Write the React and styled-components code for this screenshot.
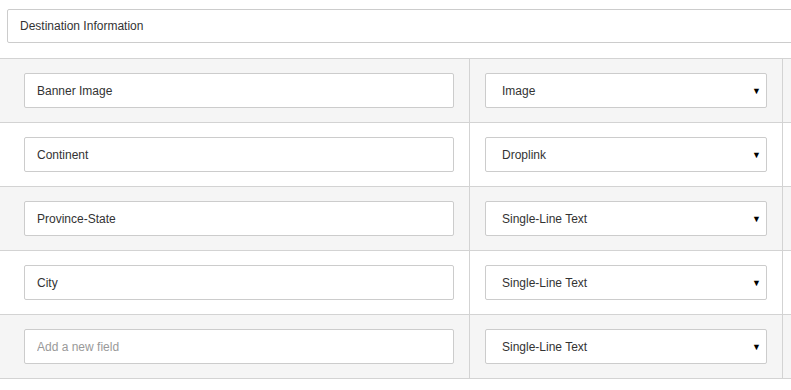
import React from 'react'
import styled, { createGlobalStyle } from 'styled-components'

const GlobalStyle = createGlobalStyle`
  html, body {
    margin: 0;
    padding: 0;
    background: #fff;
  }
  body {
    font-family: "Liberation Sans", Arial, sans-serif;
    font-size: 12px;
    color: #333;
  }
`

const Page = styled.div`
  width: 791px;
  height: 390px;
  overflow: hidden;
  padding-top: 9px;
  box-sizing: border-box;
`
const SectionTitle = styled.div`
  margin: 0 -20px 15px 7px;
  height: 34px;
  border: 1px solid #ccc;
  border-radius: 2px;
  box-sizing: border-box;
  padding-left: 12px;
  display: flex;
  align-items: center;
`
const Table = styled.div`
  display: grid;
  grid-template-columns: 470px 313px 1fr;
  border-top: 1px solid #d3d3d3;
`
const Cell = styled.div`
  background: ${p => (p.$shaded ? '#f5f5f5' : '#fff')};
  border-bottom: 1px solid #d3d3d3;
  border-right: ${p => (p.$last ? 'none' : '1px solid #d3d3d3')};
  padding: 14px 15px 14px ${p => (p.$first ? '24px' : '15px')};
  min-height: 63px;
  box-sizing: border-box;
`
const TextInput = styled.input`
  display: block;
  width: 100%;
  height: 35px;
  box-sizing: border-box;
  border: 1px solid #ccc;
  border-radius: 2px;
  background: #fff;
  padding: 0 12px;
  font-family: inherit;
  font-size: 12px;
  color: #333;
  outline: none;
  &::placeholder {
    color: #999;
  }
`
const SelectWrap = styled.div`
  position: relative;
`
const Select = styled.select`
  display: block;
  width: 100%;
  height: 35px;
  box-sizing: border-box;
  border: 1px solid #ccc;
  border-radius: 2px;
  background: #fff;
  padding: 0 24px 0 16px;
  font-family: inherit;
  font-size: 12px;
  color: #333;
  appearance: none;
  -webkit-appearance: none;
  outline: none;
`
const Arrow = styled.span`
  position: absolute;
  right: 6px;
  top: 50%;
  transform: translateY(-50%);
  font-size: 9px;
  color: #000;
  pointer-events: none;
`

const types = ['Image', 'Droplink', 'Single-Line Text']

const fields = [
  { name: 'Banner Image', type: 'Image' },
  { name: 'Continent', type: 'Droplink' },
  { name: 'Province-State', type: 'Single-Line Text' },
  { name: 'City', type: 'Single-Line Text' },
  { name: '', type: 'Single-Line Text', placeholder: 'Add a new field' }
]

const App = () => (
  <Page>
    <GlobalStyle />
    <SectionTitle>Destination Information</SectionTitle>
    <Table>
      {fields.map((f, i) => {
        const shaded = i % 2 === 0
        return (
          <React.Fragment key={i}>
            <Cell $shaded={shaded} $first>
              <TextInput defaultValue={f.name} placeholder={f.placeholder} />
            </Cell>
            <Cell $shaded={shaded}>
              <SelectWrap>
                <Select defaultValue={f.type}>
                  {types.map(t => <option key={t}>{t}</option>)}
                </Select>
                <Arrow>▼</Arrow>
              </SelectWrap>
            </Cell>
            <Cell $shaded={shaded} $last />
          </React.Fragment>
        )
      })}
    </Table>
  </Page>
)

export default App
